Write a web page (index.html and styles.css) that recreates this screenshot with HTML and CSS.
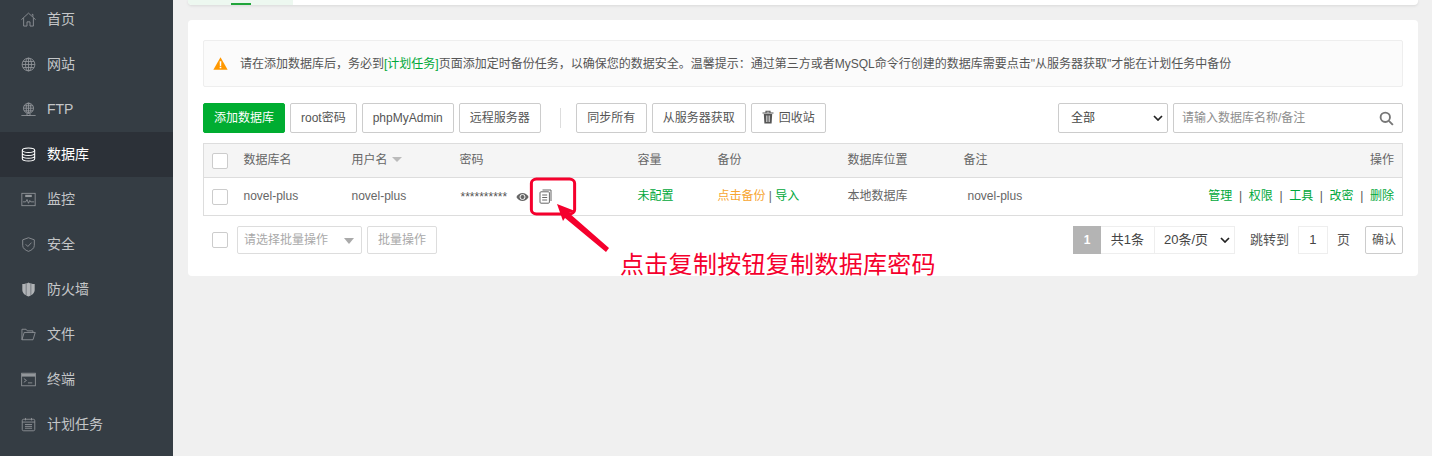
FILE: index.html
```html
<!DOCTYPE html>
<html lang="zh-CN">
<head>
<meta charset="utf-8">
<title>数据库</title>
<link rel="stylesheet" href="styles.css">
</head>
<body>
<div class="app">
  <aside class="sidebar">
    <a class="nav-item"><svg class="nav-icon" viewBox="0 0 16 16"><path d="M.4 8.200 8 1.200l7.600 7M2.800 6.500V15h3.600v-4.500h3.200V15h3.600V6.500M11.500 2.500h1.200v2.600"/></svg><span>首页</span></a>
    <a class="nav-item"><svg class="nav-icon" viewBox="0 0 16 16"><circle cx="8" cy="8" r="6.800"/><ellipse cx="8" cy="8" rx="3.200" ry="6.800"/><path d="M8 1.200v13.600M1.200 8h13.600M2.200 4.800h11.600M2.200 11.200h11.600"/></svg><span>网站</span></a>
    <a class="nav-item"><svg class="nav-icon" viewBox="0 0 16 16"><circle cx="8" cy="6.600" r="5.400"/><ellipse cx="8" cy="6.600" rx="2.400" ry="5.400"/><path d="M8 1.200v10.800M2.600 6.600h10.800M3.200 4h9.600M3.200 9.400h9.600M.4 14.400h15.200M6.400 12v2.400h3.200V12"/></svg><span>FTP</span></a>
    <a class="nav-item active"><svg class="nav-icon" viewBox="0 0 16 16"><ellipse cx="8" cy="3.400" rx="6.600" ry="2.400"/><path d="M1.400 3.400v9.200c0 1.300 3 2.400 6.600 2.400s6.600-1.100 6.600-2.400V3.400M1.400 6.600C1.400 7.900 4.400 9 8 9s6.600-1.100 6.600-2.400M1.400 9.600C1.400 10.900 4.400 12 8 12s6.600-1.100 6.600-2.400"/></svg><span>数据库</span></a>
    <a class="nav-item"><svg class="nav-icon" viewBox="0 0 16 16"><rect x=".9" y="1.400" width="14.200" height="13.200"/><rect class="fill" x="4.500" y="3" width="7" height="2.400"/><path d="M2 10.500h3l1.400-2.500 1.600 4 1.400-3 1 1.500H14"/></svg><span>监控</span></a>
    <a class="nav-item"><svg class="nav-icon" viewBox="0 0 16 16"><path d="M8 .8 14.200 3v6c0 3-2.600 5-6.200 6.300C4.400 14 1.800 12 1.800 9V3zM5 7.800l2.300 2.300L11.200 6"/></svg><span>安全</span></a>
    <a class="nav-item"><svg class="nav-icon" viewBox="0 0 16 16"><path class="fill solid" d="M8 .6c1.600 1 4 1.600 6.600 1.600v6.400c0 3.200-2.800 5.600-6.600 6.800-3.800-1.200-6.600-3.600-6.600-6.800V2.200C4 2.200 6.400 1.600 8 .6z"/><path class="gap" d="M5.500 1.800v12M10.500 1.800v12"/></svg><span>防火墙</span></a>
    <a class="nav-item"><svg class="nav-icon" viewBox="0 0 16 16"><path d="M1 13.600V2.400h4.400l1.300 1.700h6v1.700M1 13.600h11.800l2.400-7.800H3.400z"/></svg><span>文件</span></a>
    <a class="nav-item"><svg class="nav-icon" viewBox="0 0 16 16"><rect x=".7" y="1.300" width="14.600" height="13.400"/><path class="bar" d="M.7 3.400h14.600"/><path d="m3 7 2.800 2L3 11M7.400 11.600H12"/></svg><span>终端</span></a>
    <a class="nav-item"><svg class="nav-icon" viewBox="0 0 16 16"><rect x="1.300" y="2.400" width="13.400" height="12.300" rx="1.500"/><path d="M1.300 5.400h13.400M4.800 1v2.600M11.200 1v2.600M4.200 8h7.600M4.200 10h7.600M4.200 12h7.600"/></svg><span>计划任务</span></a>
  </aside>

  <main class="main">
    <div class="tabs-card">
      <div class="tab-current"><i class="tab-mark"></i></div>
    </div>

    <section class="card">
      <div class="alert">
        <svg class="alert-icon" viewBox="0 0 16 14"><path class="tri" d="M8 .4 15.700 13.600H.3z"/><path class="ex" d="M7.100 4.600h1.800l-.2 5H7.300zM7.100 10.500h1.800v1.700H7.100z"/></svg>
        <p class="alert-text">请在添加数据库后，务必到<a class="link">[计划任务]</a>页面添加定时备份任务，以确保您的数据安全。温馨提示：通过第三方或者MySQL命令行创建的数据库需要点击"从服务器获取"才能在计划任务中备份</p>
      </div>

      <div class="toolbar">
        <button class="btn btn-primary">添加数据库</button>
        <button class="btn">root密码</button>
        <button class="btn">phpMyAdmin</button>
        <button class="btn">远程服务器</button>
        <span class="divider"></span>
        <button class="btn btn-wide">同步所有</button>
        <button class="btn">从服务器获取</button>
        <button class="btn btn-icon"><svg class="trash" viewBox="0 0 12 14"><path class="lid" d="M.5 3h11M4 3V1.200h4V3"/><path class="bin" d="M1.800 4h8.400l-.6 9.500H2.400z"/><path class="slots" d="M4.500 5.500v6.500M6 5.500v6.500M7.500 5.500v6.500"/></svg>回收站</button>
        <div class="toolbar-right">
          <div class="select type-select">全部<svg class="chev" viewBox="0 0 10 6"><path d="m1 1 4 4 4-4"/></svg></div>
          <div class="search">
            <span class="placeholder">请输入数据库名称/备注</span>
            <svg class="search-icon" viewBox="0 0 16 16"><circle cx="6.700" cy="6.700" r="5"/><path d="m10.500 10.500 4.300 4.300"/></svg>
          </div>
        </div>
      </div>

      <table class="table">
        <colgroup>
          <col class="c-check"><col class="c-name"><col class="c-user"><col class="c-pass"><col class="c-size"><col class="c-backup"><col class="c-loc"><col class="c-note"><col>
        </colgroup>
        <thead>
          <tr>
            <th><span class="check"></span></th>
            <th>数据库名</th>
            <th>用户名<i class="sort"></i></th>
            <th>密码</th>
            <th>容量</th>
            <th>备份</th>
            <th>数据库位置</th>
            <th>备注</th>
            <th class="right">操作</th>
          </tr>
        </thead>
        <tbody>
          <tr>
            <td><span class="check"></span></td>
            <td>novel-plus</td>
            <td>novel-plus</td>
            <td>
              <div class="pass">
                <span class="stars">**********</span>
                <svg class="eye" viewBox="0 0 14 10"><path class="eye-o" d="M.4 5C2 2 4.300.6 7 .6S12 2 13.600 5C12 8 9.700 9.400 7 9.400S2 8 .4 5z"/><circle class="eye-p" cx="7" cy="5" r="2.700"/></svg>
                <svg class="copy" viewBox="0 0 13 15"><path d="M3.500 1H12v11"/><rect x="1" y="2.800" width="9.400" height="11.400" rx="1"/><path d="M3.200 6h5M3.200 8.500h5M3.200 11h5"/></svg>
              </div>
            </td>
            <td><a class="link">未配置</a></td>
            <td><a class="warn">点击备份</a> | <a class="link">导入</a></td>
            <td>本地数据库</td>
            <td><span class="note">novel-plus</span></td>
            <td class="right actions"><a class="link">管理</a><b>|</b><a class="link">权限</a><b>|</b><a class="link">工具</a><b>|</b><a class="link">改密</a><b>|</b><a class="link">删除</a></td>
          </tr>
        </tbody>
      </table>

      <div class="footer">
        <span class="check"></span>
        <div class="select batch-select">请选择批量操作<i class="caret"></i></div>
        <button class="btn btn-muted">批量操作</button>
        <div class="pager">
          <span class="page-cell page-on">1</span>
          <span class="page-cell page-total">共1条</span>
          <span class="page-cell page-size">20条/页<svg class="chev" viewBox="0 0 10 6"><path d="m1 1 4 4 4-4"/></svg></span>
          <span class="jump">跳转到</span>
          <span class="page-cell page-input">1</span>
          <span class="jump">页</span>
          <button class="btn btn-go">确认</button>
        </div>
      </div>
    </section>
  </main>
</div>

<svg class="note-frame" viewBox="0 0 100 100" preserveAspectRatio="none"><rect x="3" y="3" width="94" height="94" rx="11" vector-effect="non-scaling-stroke"/></svg>
<svg class="note-arrow" viewBox="0 0 56 56"><path d="M1 3 19 10 13 12 53 47 50 51 9 17 7 20z"/></svg>
<div class="note-text">点击复制按钮复制数据库密码</div>
</body>
</html>
```
FILE: styles.css
```css
* { box-sizing: border-box; }
html, body { margin: 0; height: 100%; overflow: hidden; }
body {
  position: relative;
  background: #f0f0f0;
  color: #555;
  font: 12px/1.4 "Liberation Sans", "Noto Sans CJK SC", sans-serif;
}
.app { display: flex; height: 456px; overflow: hidden; }

.sidebar { flex: 0 0 173px; background: #353d44; padding-top: 0; overflow: hidden; }
.nav-item {
  display: flex;
  align-items: center;
  height: 45px;
  padding-left: 21px;
  gap: 11px;
  color: #c4c6c8;
  font-size: 14px;
}
.nav-item:first-child { margin-top: -3px; }
.nav-item.active { background: #2c3138; color: #fff; }
.nav-icon { width: 15px; height: 15px; fill: none; stroke: #93979b; stroke-width: .9; flex: none; }
.active .nav-icon { stroke: #fff; stroke-width: 1.100; }
.nav-icon .fill { fill: #93979b; stroke: none; }
.nav-icon .solid { fill: #b0b3b6; }
.nav-icon .gap { stroke: #353d44; stroke-width: .5; }
.nav-icon .bar { stroke-width: 3; }

.main { flex: 1; padding: 0 14px 0 15px; min-width: 0; }
.tabs-card {
  height: 5px;
  background: #fff;
  border-radius: 0 0 4px 4px;
  box-shadow: 0 1px 3px rgba(0,0,0,.1);
  overflow: hidden;
}
.tab-current { position: relative; width: 105px; height: 5px; background: #edf8f0; }
.tab-mark { display: block; width: 20px; height: 2px; background: #20a53a; margin-left: 43px; margin-top: 3px; position: absolute; top: 0; }

.card { margin-top: 15px; background: #fff; border-radius: 4px; padding: 20px 15px 22px; height: 256px; }
.alert {
  display: flex;
  align-items: center;
  height: 47px;
  padding-left: 9px;
  background: #fbfbfb;
  border: 1px solid #eee;
  border-radius: 2px;
}
.alert-icon { width: 15px; height: 13px; flex: none; margin-right: 12px; }
.tri { fill: #ff9800; }
.ex { fill: #fff; }
.alert-text { margin: 2px 0 0; color: #555; white-space: nowrap; }
.link { color: #00a83a; }
.warn { color: #f7a531; }

.toolbar { display: flex; align-items: center; height: 30px; margin-top: 16px; gap: 5px; }
.btn {
  height: 30px;
  padding: 0 10px;
  border: 1px solid #ccc;
  border-radius: 2px;
  background: #fff;
  color: #555;
  font: inherit;
  white-space: nowrap;
}
.btn-primary { width: 82px; padding: 0; background: #00ad31; border-color: #00ad31; color: #fff; }
.btn-wide { width: 71px; padding: 0; }
.divider { width: 1px; height: 20px; background: #ddd; margin: 0 10px 0 14px; }
.btn-icon { display: inline-flex; align-items: center; gap: 5px; }
.trash { width: 12px; height: 14px; margin-top: -2px; }
.trash .lid { fill: none; stroke: #555; stroke-width: 1.100; }
.trash .bin { fill: #555; }
.trash .slots { fill: none; stroke: #fff; stroke-width: .6; }
.toolbar-right { margin-left: auto; display: flex; gap: 5px; }
.select { display: flex; align-items: center; height: 30px; background: #fff; border: 1px solid #ccc; border-radius: 2px; }
.type-select { width: 110px; padding: 0 4px 0 12px; justify-content: space-between; color: #444; }
.chev { width: 10px; height: 6px; fill: none; stroke: #222; stroke-width: 1.700; flex: none; }
.search { display: flex; align-items: center; justify-content: space-between; width: 230px; height: 30px; padding: 0 8px; border: 1px solid #ccc; border-radius: 2px; }
.placeholder { color: #8e8e8e; }
.search-icon { width: 15px; height: 15px; fill: none; stroke: #777; stroke-width: 2; }

.table { width: 100%; margin-top: 10px; border-collapse: collapse; table-layout: fixed; border: 1px solid #ddd; }
.c-check { width: 40px; }
.c-name, .c-user { width: 108px; }
.c-pass { width: 178px; }
.c-size { width: 80px; }
.c-backup { width: 130px; }
.c-loc { width: 116px; }
.c-note { width: 199px; }
th, td { padding: 0; font-weight: 400; text-align: left; color: #666; white-space: nowrap; }
th { height: 34px; background: #f5f5f5; border-bottom: 1px solid #ddd; }
td { height: 38px; }
th:first-child, td:first-child { padding-left: 8px; }
th.right, td.right { padding-right: 8px; text-align: right; }
.check { display: block; width: 16px; height: 16px; background: #fff; border: 1px solid #ccc; border-radius: 2px; }
.sort { display: inline-block; margin-left: 4px; border: 5px solid transparent; border-top: 5px solid #bbb; border-bottom: 0; vertical-align: 2px; }
.pass { display: flex; align-items: center; position: relative; }
.stars { width: 56px; color: #555; padding-left: 1px; font-size: 12px; line-height: 12px; }
.eye { width: 13px; height: 10px; margin-left: 0; }
.eye-o { fill: #666; }
.eye-p { fill: #666; stroke: #fff; stroke-width: 1; }
.copy { width: 13px; height: 15px; margin-left: 10px; fill: #fff; stroke: #666; stroke-width: 1; }
.note { padding-left: 4px; }
.actions b { font-weight: 400; margin: 0 6.650px; color: #555; }

.footer { display: flex; align-items: center; height: 28px; margin-top: 10px; padding-left: 9px; }
.batch-select { position: relative; width: 125px; height: 28px; margin-left: 9px; padding-left: 6px; border-color: #ddd; color: #a9a9a9; }
.caret { position: absolute; right: 7px; top: 11px; border: 5.500px solid transparent; border-top: 6px solid #aaa; border-bottom: 0; }
.btn-muted { height: 28px; margin-left: 5px; padding: 0 10px; border-color: #ddd; color: #a9a9a9; }
.pager { margin-left: auto; display: flex; align-items: center; font-size: 13px; }
.page-cell { display: flex; align-items: center; justify-content: center; height: 28px; background: #fff; border: 1px solid #eee; border-left: 0; color: #444; }
.page-on { width: 28px; background: #b4b4b4; border: 0; color: #fff; font-weight: 700; font-size: 12px; }
.page-total { width: 54px; }
.page-size { width: 80px; justify-content: space-between; padding: 0 4px 0 9px; }
.jump { color: #555; margin: 0 9px 0 15px; }
.page-input { width: 30px; border-left: 1px solid #eee; }
.page-input + .jump { margin: 0 15px 0 9px; }
.btn-go { width: 38px; height: 28px; padding: 0; font-size: 12px; }

.note-frame { position: absolute; left: 530px; top: 178px; width: 46px; height: 37px; fill: none; stroke: #f5002d; stroke-width: 3; overflow: visible; }
.note-arrow { position: absolute; left: 556px; top: 201px; width: 56px; height: 56px; fill: #f5002d; }
.note-text { position: absolute; left: 620px; top: 248px; font-size: 24px; letter-spacing: .3px; line-height: 34px; color: #f5002d; white-space: nowrap; }
```
